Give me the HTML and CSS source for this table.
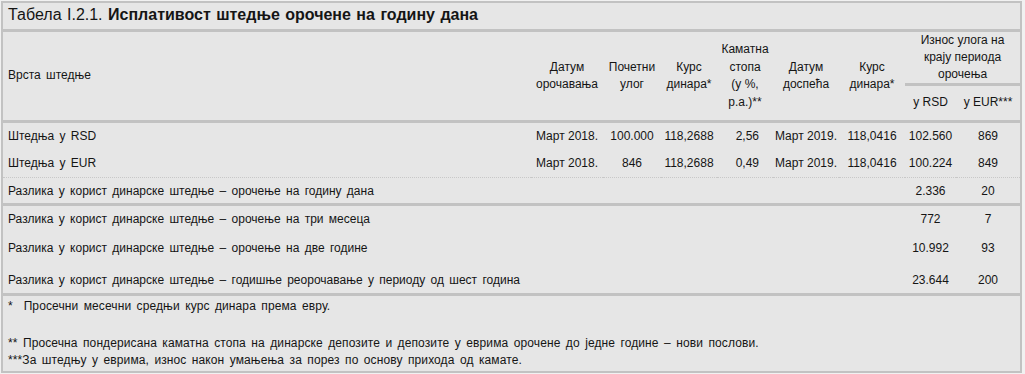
FILE: index.html
```html
<!DOCTYPE html>
<html lang="sr">
<head>
<meta charset="utf-8">
<title>Табела I.2.1.</title>
<link rel="stylesheet" href="styles.css">
</head>
<body>
<div class="panel">
  <div class="title">Табела I.2.1. <b>Исплативост штедње орочене на годину дана</b></div>
  <table class="grid">
    <colgroup>
      <col class="c0"><col class="c1"><col class="c2"><col class="c3"><col class="c4"><col class="c5"><col class="c6"><col class="c7"><col class="c8">
    </colgroup>
    <thead>
      <tr class="ha">
        <th rowspan="2" class="lbl">Врста штедње</th>
        <th rowspan="2">Датум<br>орочавања</th>
        <th rowspan="2">Почетни<br>улог</th>
        <th rowspan="2">Курс<br>динара*</th>
        <th rowspan="2">Каматна<br>стопа<br>(у %,<br>р.а.)**</th>
        <th rowspan="2">Датум<br>доспећа</th>
        <th rowspan="2">Курс<br>динара*</th>
        <th colspan="2" class="iznos">Износ улога на<br>крају периода<br>орочења</th>
      </tr>
      <tr class="hb">
        <th>у RSD</th>
        <th>у EUR***</th>
      </tr>
    </thead>
    <tbody class="sec">
      <tr class="r1">
        <td class="lbl">Штедња у RSD</td>
        <td>Март 2018.</td><td>100.000</td><td>118,2688</td><td class="rate">2,56</td><td>Март 2019.</td><td>118,0416</td><td>102.560</td><td>869</td>
      </tr>
      <tr class="r2">
        <td class="lbl">Штедња у EUR</td>
        <td>Март 2018.</td><td>846</td><td>118,2688</td><td class="rate">0,49</td><td>Март 2019.</td><td>118,0416</td><td>100.224</td><td>849</td>
      </tr>
      <tr class="r3">
        <td class="lbl">Разлика у корист динарске штедње – орочење на годину дана</td>
        <td></td><td></td><td></td><td></td><td></td><td></td><td>2.336</td><td>20</td>
      </tr>
    </tbody>
    <tbody class="sec">
      <tr class="r4">
        <td class="lbl">Разлика у корист динарске штедње – орочење на три месеца</td>
        <td></td><td></td><td></td><td></td><td></td><td></td><td>772</td><td>7</td>
      </tr>
      <tr class="r5">
        <td class="lbl">Разлика у корист динарске штедње – орочење на две године</td>
        <td></td><td></td><td></td><td></td><td></td><td></td><td>10.992</td><td>93</td>
      </tr>
      <tr class="r6">
        <td class="lbl">Разлика у корист динарске штедње – годишње реорочавање у периоду од шест година</td>
        <td></td><td></td><td></td><td></td><td></td><td></td><td>23.644</td><td>200</td>
      </tr>
    </tbody>
  </table>
  <div class="notes">
    <p class="n1">*&nbsp;&nbsp;Просечни месечни средњи курс динара према евру.</p>
    <p class="n2">**&nbsp;Просечна пондерисана каматна стопа на динарске депозите и депозите у еврима орочене до једне године – нови послови.</p>
    <p class="n3">***За штедњу у еврима, износ након умањења за порез по основу прихода од камате.</p>
  </div>
</div>
</body>
</html>
```

FILE: styles.css
```css
html, body {
  margin: 0;
  padding: 0;
  background: #f1f1f1;
}

body {
  font-family: "Liberation Sans", Arial, sans-serif;
  color: #151515;
  font-size: 12px;
}

.panel {
  margin: 1px 0 0 1px;
  width: 1017px;
  background: #e6e6e6;
  border: 2px solid #c2c2c2;
}

.title {
  height: 26px;
  line-height: 24px;
  padding-left: 5px;
  font-size: 16px;
  word-spacing: 1px;
  border-bottom: 3px solid #c2c2c2;
  white-space: nowrap;
}

.title b {
  font-weight: bold;
}

.grid {
  width: 1017px;
  table-layout: fixed;
  border-collapse: collapse;
}

.c0 { width: 528px; }
.c1 { width: 72px; }
.c2 { width: 58px; }
.c3 { width: 56px; }
.c4 { width: 56px; }
.c5 { width: 66px; }
.c6 { width: 66px; }
.c7 { width: 51px; }
.c8 { width: 64px; }

.grid th,
.grid td {
  padding: 0;
  font-weight: normal;
  text-align: center;
  vertical-align: middle;
  white-space: nowrap;
}

.grid th {
  line-height: 17.5px;
}

.grid .lbl {
  text-align: left;
  padding-left: 5px;
  word-spacing: 2px;
}

.grid thead {
  border-bottom: 3px solid #c2c2c2;
}

.ha {
  height: 51px;
}

.hb {
  height: 37px;
}

.grid th.iznos {
  line-height: 17px;
  vertical-align: top;
  border-bottom: 3px solid #c2c2c2;
}

.sec {
  border-bottom: 3px solid #c2c2c2;
}

.grid td.rate {
  text-align: right;
  padding-right: 14px;
}

.r1 { height: 27px; }
.r2 { height: 29px; }
.r3 { height: 27px; border-top: 1px dotted #c8c8c8; }
.r4 { height: 28px; }
.r5 { height: 30px; }
.r6 { height: 32px; }
.r6 td { padding-top: 4px; }

.notes {
  padding: 2px 0 0 5px;
  height: 73px;
  line-height: 17px;
  word-spacing: 2px;
  letter-spacing: 0.1px;
}

.notes p {
  margin: 0;
  white-space: nowrap;
}

.notes .n2 {
  margin-top: 20px;
}
```
